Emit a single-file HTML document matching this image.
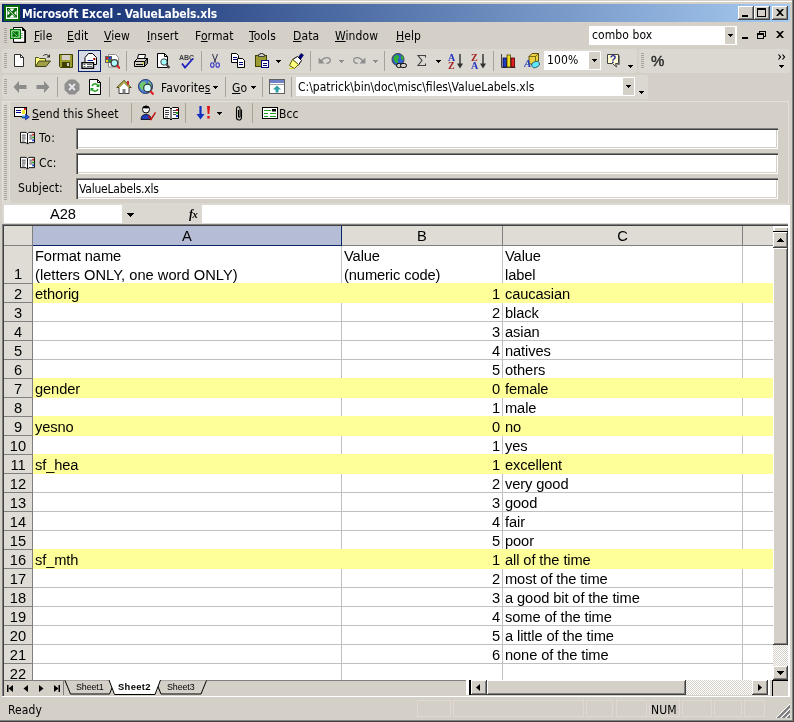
<!DOCTYPE html>
<html lang="en"><head><meta charset="utf-8"><title>Microsoft Excel - ValueLabels.xls</title>
<style>
html,body{margin:0;padding:0;background:#d4d0c8;}
body{width:794px;height:722px;overflow:hidden;position:relative;font-family:"Liberation Sans","DejaVu Sans",sans-serif;font-size:12px;color:#000;}
#win{will-change:transform;position:absolute;left:0;top:0;width:794px;height:722px;background:#d4d0c8;overflow:hidden;}
#win div,#win svg{position:absolute;}
.ui{font-family:"DejaVu Sans Condensed","Liberation Sans",sans-serif;font-size:12px;line-height:15px;white-space:nowrap;letter-spacing:0.1px;}
.ui u{text-decoration:underline;text-underline-offset:1px;text-decoration-thickness:1px;}
#title{left:2px;top:4px;width:788px;height:18px;background:linear-gradient(to right,#0a246a 0%,#a6caf0 100%);}
#title .tt{color:#fff;font-weight:bold;letter-spacing:-0.12px;}
.tb{background:#d4d0c8;box-shadow:inset -1px -1px 0 #404040,inset 1px 1px 0 #fff,inset -2px -2px 0 #808080;}
.grip{width:3px;background:repeating-linear-gradient(to bottom,#a8a49c 0,#a8a49c 1px,transparent 1px,transparent 2px);}
.sep{width:1px;background:#a6a399;}
.band{background:#dbd8d1;border-radius:3px;}
.inp{background:#fff;box-shadow:inset 1px 1px 0 #808080,inset 2px 2px 0 #404040,inset -1px -1px 0 #fff,inset -2px -2px 0 #d4d0c8;}
.dd{width:0;height:0;border-left:3px solid transparent;border-right:3px solid transparent;border-top:3px solid #000;}
.dd.g{border-top-color:#8c8c8c;}
/* grid */
#grid{left:4px;top:226px;width:769px;height:454px;background:#fff;overflow:hidden;font-family:"Liberation Sans",sans-serif;font-size:14.67px;}
.hc{background:#dfdcd5;border-right:1px solid #808080;border-bottom:1px solid #808080;text-align:center;line-height:20px;font-size:14.67px;}
.hc.sel{background:#b5bdd6;border-right-color:#0a246a;border-bottom-color:#0a246a;}
.rh{left:0;width:28px;background:#dfdcd5;border-right:1px solid #808080;border-bottom:1px solid #808080;text-align:center;line-height:21px;overflow:hidden;font-size:14.67px;}
.yel{left:29px;width:741px;height:20px;background:#ffff99;}
.gl{background:#c0c0c0;}
.ct{letter-spacing:-0.1px;white-space:nowrap;line-height:19px;height:19px;font-size:14.67px;font-family:"Liberation Sans",sans-serif;}
.ct.r{text-align:right;}
/* scroll */
.sbtn{background:#d4d0c8;box-shadow:inset -1px -1px 0 #404040,inset 1px 1px 0 #fff,inset -2px -2px 0 #808080;}
.dith{background-color:#fff;background-image:conic-gradient(#d4d0c8 25%,#fff 0 50%,#d4d0c8 0 75%,#fff 0);background-size:2px 2px;}
.tabt{font-family:"Liberation Sans",sans-serif;font-size:8.900px;line-height:12px;white-space:nowrap;letter-spacing:-0.1px;}

</style></head><body>
<div id="win">
<div style="left:0px;top:1px;width:792px;height:1px;background:#fff"></div>
<div style="left:792px;top:0px;width:1px;height:721px;background:#808080"></div>
<div style="left:793px;top:0px;width:1px;height:722px;background:#404040"></div>
<div style="left:0px;top:720px;width:793px;height:1px;background:#808080"></div>
<div style="left:0px;top:721px;width:794px;height:1px;background:#404040"></div>
<div id="title">
<svg style="left:2px;top:1px" width="16" height="16" viewBox="0 0 16 16" ><rect width="16" height="16" fill="#066a06"/><rect x="2.500" y="2.500" width="11" height="11" fill="none" stroke="#fff"/><path d="M5.500 3.500h5l-2.500 3zM5.500 12.500h5l-2.500-3zM3.500 5.500v5l2.500-2.500zM12.500 5.500v5l-2.500-2.500z" fill="#fff"/><path d="M4.500 4.500l6.500 7" stroke="#fff" stroke-width=".900"/><rect x="2" y="12.500" width="12" height="1.500" fill="#fff"/></svg>
<div class="tt ui" style="left:20px;top:3px;">Microsoft Excel - ValueLabels.xls</div>
<div class="tb" style="left:736px;top:2px;width:16px;height:14px;"><div style="left:4px;top:9px;width:6px;height:2px;background:#000"></div></div>
<div class="tb" style="left:752px;top:2px;width:16px;height:14px;"><div style="left:3px;top:2px;width:9px;height:9px;box-sizing:border-box;border:1px solid #000;border-top-width:2px"></div></div>
<div class="tb" style="left:770px;top:2px;width:16px;height:14px;"><svg style="left:4px;top:3px" width="8" height="7" viewBox="0 0 8 7"><path d="M0 0h2l2 2 2-2h2l-3 3.500 3 3.500h-2l-2-2-2 2h-2l3-3.500z" fill="#000"/></svg></div>
</div>
<div class="grip" style="left:4px;top:28px;height:15px"></div>
<svg style="left:10px;top:27px" width="16" height="16" viewBox="0 0 16 16" ><path d="M3.500 .500h9l3 3v12h-12z" fill="#fff" stroke="#000"/><path d="M12.500 .500v3h3z" fill="#000" stroke="#000"/><path d="M15 4v11.500h-11" fill="none" stroke="#000" stroke-width="1.600"/><path d="M11 6.500h2M11 8.500h2M11 10.500h2" stroke="#a0c0a0"/><rect x=".500" y="2.500" width="10" height="9" fill="#18a028" stroke="#0a7a0a"/><rect x="1.800" y="3.800" width="7.400" height="6.400" fill="none" stroke="#d8f0d8" stroke-width=".800"/><path d="M3 5l4.500 4.500M7.500 5l-4.500 4.500" stroke="#066a06" stroke-width="1.800"/><path d="M3.200 5.200l4 4" stroke="#d8f0d8" stroke-width=".600"/></svg>
<div class="ui" style="left:34px;top:29px;"><u>F</u>ile</div>
<div class="ui" style="left:67px;top:29px;"><u>E</u>dit</div>
<div class="ui" style="left:104px;top:29px;"><u>V</u>iew</div>
<div class="ui" style="left:147px;top:29px;"><u>I</u>nsert</div>
<div class="ui" style="left:195px;top:29px;">F<u>o</u>rmat</div>
<div class="ui" style="left:249px;top:29px;"><u>T</u>ools</div>
<div class="ui" style="left:293px;top:29px;"><u>D</u>ata</div>
<div class="ui" style="left:335px;top:29px;"><u>W</u>indow</div>
<div class="ui" style="left:396px;top:29px;"><u>H</u>elp</div>
<div style="left:589px;top:26px;width:148px;height:19px;background:#fff"></div>
<div class="ui" style="left:592px;top:28px;">combo box</div>
<div style="left:725px;top:27px;width:10px;height:17px;background:#d4d0c8"></div>
<svg style="left:728px;top:34px" width="5" height="3" viewBox="0 0 5 3" shape-rendering="crispEdges" fill="#000"><rect x="0" y="0" width="5" height="1"/><rect x="1" y="1" width="3" height="1"/><rect x="2" y="2" width="1" height="1"/></svg>
<div style="left:742px;top:37px;width:6px;height:2px;background:#000"></div>
<svg style="left:757px;top:30px" width="9" height="9" viewBox="0 0 9 9" shape-rendering="crispEdges"><path d="M2.500 2.500v-1.500h6v5h-2" fill="none" stroke="#000"/><path d="M2 1h7" stroke="#000"/><rect x=".500" y="3.500" width="6" height="5" fill="none" stroke="#000"/><path d="M0 4h7" stroke="#000"/></svg>
<svg style="left:776px;top:31px" width="8" height="7" viewBox="0 0 8 7"><path d="M0 0h2l2 2 2-2h2l-3 3.500 3 3.500h-2l-2-2-2 2h-2l3-3.500z" fill="#000"/></svg>
<div class="band" style="left:2px;top:49px;width:635px;height:24px;"></div>
<div class="grip" style="left:4px;top:53px;height:15px"></div>
<svg style="left:12px;top:53px" width="16" height="16" viewBox="0 0 16 16" ><path d="M2.500 1.500h6l3 3v9h-9z" fill="#fff" stroke="#303030"/><path d="M8.500 1.500v3h3" fill="none" stroke="#303030"/></svg>
<svg style="left:35px;top:53px" width="16" height="16" viewBox="0 0 16 16" ><path d="M.500 13.500v-9h3l1 1h6v2.500" fill="#ffff80" stroke="#505020"/><path d="M.500 13.500l3.500-5.500h11.500l-4.500 5.500z" fill="#a0a048" stroke="#404010"/><path d="M8 3c1.500-2 4.500-2 6 .500" fill="none" stroke="#303030"/><path d="M15 1v3.500h-3.500z" fill="#303030"/></svg>
<svg style="left:58px;top:53px" width="16" height="16" viewBox="0 0 16 16" ><path d="M1.500 1.500h13v13h-12l-1-1z" fill="#9c9c31" stroke="#404000"/><rect x="4" y="2" width="8" height="5" fill="#d4d0c8"/><rect x="4" y="9" width="8" height="5" fill="#404000"/><rect x="9" y="10" width="2" height="3" fill="#d4d0c8"/></svg>
<div style="left:78px;top:50px;width:23px;height:22px;background:#d6d9e6;border:1px solid #0a246a;box-sizing:border-box"></div>
<svg style="left:81px;top:53px" width="16" height="16" viewBox="0 0 16 16" ><path d="M4 12.500V4.500L7.500 .500H11.500L15.500 4.500V11.500H13" fill="#fff" stroke="#000"/><path d="M6.500 7.500h5.500" stroke="#1020a0"/><rect x="12.300" y="5" width="2" height="2" fill="#a00000"/><rect x="1" y="9.700" width="11.500" height="5.600" fill="#fff" stroke="#000" stroke-width="1.400"/><path d="M2.500 11.500h2M2.500 13.500h2M6 11.500h5M6 13.500h5" stroke="#505050" stroke-width=".900"/></svg>
<svg style="left:104px;top:53px" width="16" height="16" viewBox="0 0 16 16" ><path d="M4.500 1.500h7l3 3v9.500h-10z" fill="#fff" stroke="#909090"/><rect x="1" y="3" width="7" height="7" fill="#606060"/><rect x="2" y="4" width="2" height="2" fill="#e02020"/><rect x="5" y="4" width="2" height="2" fill="#2040e0"/><rect x="2" y="7" width="2" height="2" fill="#f0e020"/><rect x="5" y="7" width="2" height="2" fill="#20a020"/><circle cx="10.400" cy="10" r="3.300" fill="#b0ffff" stroke="#404040" stroke-width="1.300"/><path d="M13 12.500l3 3" stroke="#e02020" stroke-width="2"/></svg>
<div class="sep" style="left:126px;top:51px;height:20px"></div>
<svg style="left:133px;top:53px" width="16" height="16" viewBox="0 0 16 16" ><path d="M4.500 5.500l1-4h7l-1 4" fill="#fff" stroke="#000"/><path d="M1.500 8.500l3-3h10l-3 3z" fill="#d4d0c8" stroke="#000"/><path d="M1.500 8.500h10v5h-10z" fill="#d4d0c8" stroke="#000"/><path d="M11.500 8.500l3-3v5l-3 3z" fill="#808080" stroke="#000"/><path d="M3 11.500h7" stroke="#000"/><rect x="9" y="9.500" width="2" height="1" fill="#e0e000"/></svg>
<svg style="left:155px;top:53px" width="16" height="16" viewBox="0 0 16 16" ><path d="M2.500 .500h7l3 3v11h-10z" fill="#fff" stroke="#000"/><path d="M9.500 .500v3h3" fill="none" stroke="#000"/><circle cx="9" cy="9" r="3.200" fill="#a0ffff" stroke="#404040"/><path d="M11.500 11.500l3 3.500" stroke="#404040" stroke-width="2"/></svg>
<svg style="left:179px;top:53px" width="16" height="16" viewBox="0 0 16 16" ><text x="0" y="6.500" font-family="Liberation Sans,sans-serif" font-size="7" font-weight="bold" fill="#404040">ABC</text><path d="M3 10.500l3 4l8-9" fill="none" stroke="#2020c0" stroke-width="1.800"/></svg>
<div class="sep" style="left:201px;top:51px;height:20px"></div>
<svg style="left:207px;top:53px" width="16" height="16" viewBox="0 0 16 16" ><path d="M5.500 1l3 8.500M10.500 1l-3 8.500" stroke="#303048" fill="none"/><ellipse cx="5.300" cy="12" rx="1.700" ry="2.300" fill="none" stroke="#3838c8" stroke-width="1.100"/><ellipse cx="10.700" cy="12" rx="1.700" ry="2.300" fill="none" stroke="#3838c8" stroke-width="1.100"/></svg>
<svg style="left:231px;top:53px" width="16" height="16" viewBox="0 0 16 16" ><path d="M.500 .500h5l2 2v7h-7z" fill="#fff" stroke="#000"/><path d="M2 4.500h4M2 6.500h4" stroke="#000080"/><path d="M6.500 5.500h5l2 2v7h-7z" fill="#fff" stroke="#000"/><path d="M8 9.500h4M8 11.500h4" stroke="#000080"/></svg>
<svg style="left:254px;top:53px" width="16" height="16" viewBox="0 0 16 16" ><rect x="1.500" y="2.500" width="11" height="11" fill="#9c9c31" stroke="#404000"/><path d="M4.500 3.500v-2h1.500v-1h3v1h1.500v2z" fill="#d4d0c8" stroke="#404040"/><rect x="7.500" y="7.500" width="7" height="7" fill="#fff" stroke="#000080"/><path d="M9 10.500h4M9 12.500h4" stroke="#000080"/></svg>
<svg style="left:276px;top:60px" width="5" height="3" viewBox="0 0 5 3" shape-rendering="crispEdges" fill="#000"><rect x="0" y="0" width="5" height="1"/><rect x="1" y="1" width="3" height="1"/><rect x="2" y="2" width="1" height="1"/></svg>
<svg style="left:288px;top:53px" width="16" height="16" viewBox="0 0 16 16" ><path d="M10 5l3-4.500 2.500 1.500-3 4.500z" fill="#000080" stroke="#000040" stroke-width=".600"/><path d="M4.500 6.500l5-3 4 4-3 4.500z" fill="#fff" stroke="#000"/><path d="M1.500 12.500l3-6 6 5-4 4z" fill="#ffff80" stroke="#606000"/><path d="M1 15.500h4" stroke="#e0e000"/></svg>
<div class="sep" style="left:310px;top:51px;height:20px"></div>
<svg style="left:317px;top:53px" width="16" height="16" viewBox="0 0 16 16" ><path d="M4.500 8C6 4 13 3.500 13.300 7c0 2-1.500 3.300-4 3.300" fill="none" stroke="#8c8c8c" stroke-width="1.300"/><path d="M1.600 4.600v6h6z" fill="#8c8c8c"/></svg>
<svg style="left:339px;top:60px" width="5" height="3" viewBox="0 0 5 3" shape-rendering="crispEdges" fill="#8c8c8c"><rect x="0" y="0" width="5" height="1"/><rect x="1" y="1" width="3" height="1"/><rect x="2" y="2" width="1" height="1"/></svg>
<svg style="left:351px;top:53px" width="16" height="16" viewBox="0 0 16 16" ><path d="M11.500 8C10 4 3 3.500 2.700 7c0 2 1.500 3.300 4 3.300" fill="none" stroke="#8c8c8c" stroke-width="1.300"/><path d="M14.400 4.600v6h-6z" fill="#8c8c8c"/></svg>
<svg style="left:373px;top:60px" width="5" height="3" viewBox="0 0 5 3" shape-rendering="crispEdges" fill="#8c8c8c"><rect x="0" y="0" width="5" height="1"/><rect x="1" y="1" width="3" height="1"/><rect x="2" y="2" width="1" height="1"/></svg>
<div class="sep" style="left:384px;top:51px;height:20px"></div>
<svg style="left:391px;top:53px" width="16" height="16" viewBox="0 0 16 16" ><circle cx="7" cy="6.500" r="6" fill="#3060d0" stroke="#404040"/><path d="M3 4c2-3 5-2 5 0s-2 2-1 4-2 3-3 1-2-3-1-5z" fill="#30b030"/><path d="M10 2c2 1 3 3 2 5l-2-1z" fill="#30b030"/><rect x="5.500" y="10.500" width="5" height="4" rx="2" fill="#d4d0c8" stroke="#000"/><rect x="9.500" y="10.500" width="6" height="4" rx="2" fill="#d4d0c8" stroke="#000"/></svg>
<svg style="left:415px;top:53px" width="16" height="16" viewBox="0 0 16 16" ><path d="M10.500 4.500v-2h-7.500l4 5-4 5h7.500v-2" fill="none" stroke="#404040" stroke-width="1.100"/></svg>
<svg style="left:436px;top:60px" width="5" height="3" viewBox="0 0 5 3" shape-rendering="crispEdges" fill="#000"><rect x="0" y="0" width="5" height="1"/><rect x="1" y="1" width="3" height="1"/><rect x="2" y="2" width="1" height="1"/></svg>
<svg style="left:448px;top:53px" width="16" height="16" viewBox="0 0 16 16" ><text x="0" y="7.500" font-family="Liberation Serif,serif" font-size="10" font-weight="bold" fill="#2030c0">A</text><text x="0" y="16" font-family="Liberation Serif,serif" font-size="10" font-weight="bold" fill="#a02020">Z</text><path d="M12 1v11" stroke="#303030" stroke-width="1.400"/><path d="M9 10.500h6l-3 5z" fill="#303030"/></svg>
<svg style="left:471px;top:53px" width="16" height="16" viewBox="0 0 16 16" ><text x="0" y="7.500" font-family="Liberation Serif,serif" font-size="10" font-weight="bold" fill="#a02020">Z</text><text x="0" y="16" font-family="Liberation Serif,serif" font-size="10" font-weight="bold" fill="#2030c0">A</text><path d="M12 1v11" stroke="#303030" stroke-width="1.400"/><path d="M9 10.500h6l-3 5z" fill="#303030"/></svg>
<div class="sep" style="left:493px;top:51px;height:20px"></div>
<svg style="left:500px;top:53px" width="16" height="16" viewBox="0 0 16 16" ><path d="M1.500 1v13.500h14" fill="none" stroke="#404040"/><rect x="3" y="5" width="3.500" height="9" fill="#2040c0" stroke="#000040" stroke-width=".800"/><rect x="7" y="2" width="3.500" height="12" fill="#f0e020" stroke="#504000" stroke-width=".800"/><rect x="11" y="5" width="3.500" height="9" fill="#e02020" stroke="#400000" stroke-width=".800"/></svg>
<svg style="left:524px;top:53px" width="16" height="16" viewBox="0 0 16 16" ><path d="M5 3.500l3-3h6.500v7.500l-3 3h-6.500z" fill="#e8d040" stroke="#504000" stroke-width=".900"/><path d="M5 3.500h6.500v7.500M11.500 3.500l3-3" fill="none" stroke="#504000" stroke-width=".700"/><text x="0" y="13.500" font-family="Liberation Serif,serif" font-size="11" font-weight="bold" font-style="italic" fill="#2040c0">A</text><rect x="7.500" y="9" width="8" height="5.500" rx="2.700" fill="#60e8f8" stroke="#205060" stroke-width=".800" transform="rotate(-25 11 11.500)"/></svg>
<div style="left:544px;top:51px;width:57px;height:19px;background:#fff"></div>
<div class="ui" style="left:547px;top:53px;">100%</div>
<div style="left:589px;top:52px;width:11px;height:17px;background:#d4d0c8"></div>
<svg style="left:592px;top:59px" width="5" height="3" viewBox="0 0 5 3" shape-rendering="crispEdges" fill="#000"><rect x="0" y="0" width="5" height="1"/><rect x="1" y="1" width="3" height="1"/><rect x="2" y="2" width="1" height="1"/></svg>
<svg style="left:606px;top:53px" width="16" height="16" viewBox="0 0 16 16" ><path d="M1.500 1.500h11v9h-3l1 3.500-4-3.500h-5z" fill="#ffffd0" stroke="#404040"/><path d="M13.500 2.500v9h-3" fill="none" stroke="#808080"/><text x="3.800" y="10" font-family="Liberation Sans,sans-serif" font-size="11" font-weight="bold" fill="#2828a0">?</text></svg>
<svg style="left:628px;top:65px" width="5" height="3" viewBox="0 0 5 3" shape-rendering="crispEdges" fill="#000"><rect x="0" y="0" width="5" height="1"/><rect x="1" y="1" width="3" height="1"/><rect x="2" y="2" width="1" height="1"/></svg>
<div class="band" style="left:639px;top:49px;width:151px;height:24px;"></div>
<div class="grip" style="left:641px;top:53px;height:15px"></div>
<div class="ui" style="left:651px;top:52px;font-family:'Liberation Sans',sans-serif;font-size:15px;line-height:18px;color:#282828;-webkit-text-stroke:0.400px #282828">%</div>
<svg style="left:778px;top:54px" width="9" height="6" viewBox="0 0 9 6"><path d="M.500 .500l2 2.500-2 2.500M4.500 .500l2 2.500-2 2.500" fill="none" stroke="#000" stroke-width="1.200"/></svg>
<svg style="left:779px;top:65px" width="5" height="3" viewBox="0 0 5 3" shape-rendering="crispEdges" fill="#000"><rect x="0" y="0" width="5" height="1"/><rect x="1" y="1" width="3" height="1"/><rect x="2" y="2" width="1" height="1"/></svg>
<div class="band" style="left:2px;top:75px;width:646px;height:24px;"></div>
<div class="grip" style="left:4px;top:79px;height:15px"></div>
<svg style="left:12px;top:79px" width="16" height="16" viewBox="0 0 16 16" ><path d="M1.500 8l5.500-6v4h7.500v4h-7.500v4z" fill="#8c8c8c"/></svg>
<svg style="left:35px;top:79px" width="16" height="16" viewBox="0 0 16 16" ><path d="M14.500 8l-5.500-6v4h-7.500v4h7.500v4z" fill="#8c8c8c"/></svg>
<div class="sep" style="left:57px;top:77px;height:20px"></div>
<svg style="left:64px;top:79px" width="16" height="16" viewBox="0 0 16 16" ><path d="M5 .500h6l4.500 4.500v6l-4.500 4.500h-6l-4.500-4.500v-6z" fill="#909090"/><path d="M5 5l6 6M11 5l-6 6" stroke="#e8e8e8" stroke-width="1.800"/></svg>
<svg style="left:87px;top:79px" width="16" height="16" viewBox="0 0 16 16" ><path d="M2.500 .500h8l3 3v12h-11z" fill="#fff" stroke="#000"/><path d="M10.500 .500v3h3" fill="none" stroke="#000"/><path d="M5 7c1-3 5-3 6 0" fill="none" stroke="#20a020" stroke-width="1.500"/><path d="M12.500 4.500v3.500h-3.500z" fill="#20a020"/><path d="M11 10c-1 3-5 3-6 0" fill="none" stroke="#20a020" stroke-width="1.500"/><path d="M3.500 12.500v-3.500h3.500z" fill="#20a020"/></svg>
<div class="sep" style="left:109px;top:77px;height:20px"></div>
<svg style="left:116px;top:79px" width="16" height="16" viewBox="0 0 16 16" ><path d="M8 1.500l-7 7h2v6h10v-6h2z" fill="#fff" stroke="#404040"/><path d="M8 1.500l-7 7h2l5-5 5 5h2z" fill="#e8e060" stroke="#404000" stroke-width=".800"/><rect x="6.500" y="10" width="3" height="4.500" fill="#808080"/><rect x="11" y="2" width="2" height="4" fill="#c03030"/></svg>
<svg style="left:138px;top:79px" width="16" height="16" viewBox="0 0 16 16" ><circle cx="7.500" cy="7.500" r="7" fill="#5080d8" stroke="#203060"/><path d="M2 5c2-3 5-3 6-1s-2 3-1 5-3 3-4 1-2-3-1-5z" fill="#70c870"/><path d="M10 2c2 1 4 3 3 6l-2-2z" fill="#70c870"/><circle cx="9.500" cy="9" r="3.800" fill="#d8ffff" stroke="#303030" stroke-width="1.200"/><path d="M12.300 12l3.200 3.500" stroke="#e02020" stroke-width="2.200"/></svg>
<div class="ui" style="left:161px;top:81px;">Favorite<u>s</u></div>
<svg style="left:213px;top:86px" width="5" height="3" viewBox="0 0 5 3" shape-rendering="crispEdges" fill="#000"><rect x="0" y="0" width="5" height="1"/><rect x="1" y="1" width="3" height="1"/><rect x="2" y="2" width="1" height="1"/></svg>
<div class="sep" style="left:225px;top:77px;height:20px"></div>
<div class="ui" style="left:232px;top:81px;"><u>G</u>o</div>
<svg style="left:251px;top:86px" width="5" height="3" viewBox="0 0 5 3" shape-rendering="crispEdges" fill="#000"><rect x="0" y="0" width="5" height="1"/><rect x="1" y="1" width="3" height="1"/><rect x="2" y="2" width="1" height="1"/></svg>
<div class="sep" style="left:262px;top:77px;height:20px"></div>
<svg style="left:269px;top:79px" width="16" height="16" viewBox="0 0 16 16" ><rect x=".500" y=".500" width="15" height="14" fill="#fff" stroke="#606060"/><rect x="1" y="1" width="14" height="3" fill="#7080c8"/><path d="M1 5.500h14" stroke="#a0a0a0"/><path d="M8 6.500l-4 4h2.500v3h3v-3h2.500z" fill="#30a0a8"/></svg>
<div class="sep" style="left:291px;top:77px;height:20px"></div>
<div style="left:296px;top:77px;width:339px;height:19px;background:#fff"></div>
<div class="ui" style="left:298px;top:80px;letter-spacing:0">C:\patrick\bin\doc\misc\files\ValueLabels.xls</div>
<div style="left:623px;top:78px;width:11px;height:17px;background:#d4d0c8"></div>
<svg style="left:626px;top:85px" width="5" height="3" viewBox="0 0 5 3" shape-rendering="crispEdges" fill="#000"><rect x="0" y="0" width="5" height="1"/><rect x="1" y="1" width="3" height="1"/><rect x="2" y="2" width="1" height="1"/></svg>
<svg style="left:639px;top:91px" width="5" height="3" viewBox="0 0 5 3" shape-rendering="crispEdges" fill="#000"><rect x="0" y="0" width="5" height="1"/><rect x="1" y="1" width="3" height="1"/><rect x="2" y="2" width="1" height="1"/></svg>
<div style="left:2px;top:101px;width:787px;height:102px;background:#d4d0c8;border:1px solid #e4e1db;border-bottom:0;box-sizing:border-box"></div>
<div style="left:3px;top:102px;width:6px;height:101px;background:#dbd8d1"></div>
<div class="grip" style="left:4px;top:105px;height:95px"></div>
<div style="left:9px;top:102px;width:1px;height:101px;background:#e4e1db"></div>
<svg style="left:14px;top:105px" width="16" height="16" viewBox="0 0 16 16" ><rect x=".500" y="2.500" width="12" height="9" fill="#fff" stroke="#000"/><path d="M2 5.500h5M2 7.500h5" stroke="#000080"/><rect x="10" y="3" width="2" height="2" fill="#e02020"/><rect x="8" y="5" width="3" height="4" fill="#f0e020"/><path d="M8 11h3.500v-2l4 3-4 3v-2h-3.500z" fill="#2050e0" stroke="#001060" stroke-width=".500"/><path d="M8 11.500h3" stroke="#30c0c0"/></svg>
<div class="ui" style="left:32px;top:107px;"><u>S</u>end this Sheet</div>
<div class="sep" style="left:131px;top:103px;height:20px"></div>
<svg style="left:140px;top:105px" width="16" height="16" viewBox="0 0 16 16" ><circle cx="6" cy="4.500" r="3.500" fill="#fff" stroke="#000"/><path d="M2.500 3c1-3 6-3 7 0-2 .500-5 .500-7 0z" fill="#000"/><path d="M1 14.500c0-4 2.500-5 5-5s5 1 5 5z" fill="#2040c0" stroke="#000" stroke-width=".800"/><path d="M8.500 11l2.500 3.500 4.500-7" fill="none" stroke="#c01010" stroke-width="1.500"/></svg>
<svg style="left:163px;top:105px" width="16" height="16" viewBox="0 0 16 16" ><path d="M.500 2.500h6l1.500 1.500 1.500-1.500h6v11h-6l-1.500 1.500-1.500-1.500h-6z" fill="#fff" stroke="#000"/><path d="M8 4v11" stroke="#000"/><path d="M2 5.500h4M2 7.500h4M2 9.500h4M10 5.500h3M10 7.500h3M10 9.500h3" stroke="#404040"/><rect x="13" y="4" width="2" height="2" fill="#d02020"/><rect x="13" y="7" width="2" height="2" fill="#20a020"/><rect x="13" y="10" width="2" height="2" fill="#2040d0"/><rect x="2" y="11" width="3" height="1.500" fill="#808080"/></svg>
<div class="sep" style="left:185px;top:103px;height:20px"></div>
<svg style="left:196px;top:105px" width="16" height="16" viewBox="0 0 16 16" ><path d="M4.500 1v9" stroke="#1030c0" stroke-width="2.200"/><path d="M.500 9h8l-4 5.500z" fill="#1030c0"/><path d="M11 1h3l-.700 8h-1.600z" fill="#e01010"/><rect x="11.300" y="11" width="2.400" height="2.500" fill="#e01010"/></svg>
<svg style="left:217px;top:112px" width="5" height="3" viewBox="0 0 5 3" shape-rendering="crispEdges" fill="#000"><rect x="0" y="0" width="5" height="1"/><rect x="1" y="1" width="3" height="1"/><rect x="2" y="2" width="1" height="1"/></svg>
<svg style="left:231px;top:105px" width="16" height="16" viewBox="0 0 16 16" ><path d="M10.500 4.500v8a2.500 2.500 0 0 1-5 0v-9a1.800 1.800 0 0 1 3.600 0v8a.800 .800 0 0 1-1.600 0v-6.500" fill="none" stroke="#000" stroke-width="1.100"/></svg>
<div class="sep" style="left:252px;top:103px;height:20px"></div>
<svg style="left:262px;top:105px" width="16" height="16" viewBox="0 0 16 16" ><rect x=".500" y="2.500" width="15" height="11" fill="#fff" stroke="#000"/><path d="M2 5.500h7M2 8.500h4M2 11.500h4M8 8.500h6M8 11.500h6" stroke="#20a020" stroke-width="1.200"/><rect x="10" y="4" width="4" height="2.500" fill="#000"/></svg>
<div class="ui" style="left:279px;top:107px;">Bcc</div>
<svg style="left:20px;top:130px" width="15" height="15" viewBox="0 0 16 16" ><path d="M.500 2.500h6l1.500 1.500 1.500-1.500h6v11h-6l-1.500 1.500-1.500-1.500h-6z" fill="#fff" stroke="#000"/><path d="M8 4v11" stroke="#000"/><path d="M2 5.500h4M2 7.500h4M2 9.500h4M10 5.500h3M10 7.500h3M10 9.500h3" stroke="#404040"/><rect x="13" y="4" width="2" height="2" fill="#d02020"/><rect x="13" y="7" width="2" height="2" fill="#20a020"/><rect x="13" y="10" width="2" height="2" fill="#2040d0"/><rect x="2" y="11" width="3" height="1.500" fill="#808080"/></svg>
<div class="ui" style="left:39px;top:131px;letter-spacing:0.600px">To:</div>
<div class="inp" style="left:76px;top:128px;width:702px;height:21px;"></div>
<svg style="left:20px;top:155px" width="15" height="15" viewBox="0 0 16 16" ><path d="M.500 2.500h6l1.500 1.500 1.500-1.500h6v11h-6l-1.500 1.500-1.500-1.500h-6z" fill="#fff" stroke="#000"/><path d="M8 4v11" stroke="#000"/><path d="M2 5.500h4M2 7.500h4M2 9.500h4M10 5.500h3M10 7.500h3M10 9.500h3" stroke="#404040"/><rect x="13" y="4" width="2" height="2" fill="#d02020"/><rect x="13" y="7" width="2" height="2" fill="#20a020"/><rect x="13" y="10" width="2" height="2" fill="#2040d0"/><rect x="2" y="11" width="3" height="1.500" fill="#808080"/></svg>
<div class="ui" style="left:39px;top:156px;">Cc:</div>
<div class="inp" style="left:76px;top:153px;width:702px;height:21px;"></div>
<div class="ui" style="left:18px;top:181px;">Subject:</div>
<div class="inp" style="left:76px;top:178px;width:702px;height:21px;"></div>
<div class="ui" style="left:79px;top:182px;letter-spacing:-0.200px">ValueLabels.xls</div>
<div style="left:2px;top:203px;width:788px;height:21px;background:#dbd8d1"></div>
<div style="left:4px;top:205px;width:786px;height:18px;background:#fff"></div>
<div class="ct" style="left:50px;top:205px;font-family:'Liberation Sans',sans-serif;font-size:14.67px;line-height:18px;height:18px">A28</div>
<div style="left:122px;top:205px;width:80px;height:18px;background:#dbd8d1"></div>
<svg style="left:127px;top:213px" width="7" height="4" viewBox="0 0 7 4" shape-rendering="crispEdges" fill="#000"><rect x="0" y="0" width="7" height="1"/><rect x="1" y="1" width="5" height="1"/><rect x="2" y="2" width="3" height="1"/><rect x="3" y="3" width="1" height="1"/></svg>
<div style="left:189px;top:205px;font-family:'Liberation Serif',serif;font-style:italic;font-weight:bold;font-size:12px;line-height:18px;white-space:nowrap">f<span style="font-size:10.500px;margin-left:-0.500px">x</span></div>
<div style="left:2px;top:224px;width:788px;height:1px;background:#808080"></div>
<div style="left:3px;top:225px;width:787px;height:1px;background:#404040"></div>
<div style="left:2px;top:224px;width:1px;height:472px;background:#808080"></div>
<div style="left:3px;top:225px;width:1px;height:471px;background:#404040"></div>
<div id="grid">
<div class="hc corner" style="left:0;top:0;width:28px;height:19px"></div>
<div class="hc sel" style="left:29px;top:0;width:308px;height:19px">A</div>
<div class="hc" style="left:338px;top:0;width:160px;height:19px">B</div>
<div class="hc" style="left:499px;top:0;width:239px;height:19px">C</div>
<div class="hc" style="left:739px;top:0;width:31px;height:19px"></div>
<div class="rh" style="top:20px;padding-top:18px;height:19px">1</div>
<div class="rh" style="top:58px;height:18px">2</div>
<div class="rh" style="top:77px;height:18px">3</div>
<div class="rh" style="top:96px;height:18px">4</div>
<div class="rh" style="top:115px;height:18px">5</div>
<div class="rh" style="top:134px;height:18px">6</div>
<div class="rh" style="top:153px;height:18px">7</div>
<div class="rh" style="top:172px;height:18px">8</div>
<div class="rh" style="top:191px;height:18px">9</div>
<div class="rh" style="top:210px;height:18px">10</div>
<div class="rh" style="top:229px;height:18px">11</div>
<div class="rh" style="top:248px;height:18px">12</div>
<div class="rh" style="top:267px;height:18px">13</div>
<div class="rh" style="top:286px;height:18px">14</div>
<div class="rh" style="top:305px;height:18px">15</div>
<div class="rh" style="top:324px;height:18px">16</div>
<div class="rh" style="top:343px;height:18px">17</div>
<div class="rh" style="top:362px;height:18px">18</div>
<div class="rh" style="top:381px;height:18px">19</div>
<div class="rh" style="top:400px;height:18px">20</div>
<div class="rh" style="top:419px;height:18px">21</div>
<div class="rh" style="top:438px;height:18px">22</div>
<div class="gl" style="left:29px;top:57px;width:741px;height:1px"></div>
<div class="gl" style="left:29px;top:76px;width:741px;height:1px"></div>
<div class="gl" style="left:29px;top:95px;width:741px;height:1px"></div>
<div class="gl" style="left:29px;top:114px;width:741px;height:1px"></div>
<div class="gl" style="left:29px;top:133px;width:741px;height:1px"></div>
<div class="gl" style="left:29px;top:152px;width:741px;height:1px"></div>
<div class="gl" style="left:29px;top:171px;width:741px;height:1px"></div>
<div class="gl" style="left:29px;top:190px;width:741px;height:1px"></div>
<div class="gl" style="left:29px;top:209px;width:741px;height:1px"></div>
<div class="gl" style="left:29px;top:228px;width:741px;height:1px"></div>
<div class="gl" style="left:29px;top:247px;width:741px;height:1px"></div>
<div class="gl" style="left:29px;top:266px;width:741px;height:1px"></div>
<div class="gl" style="left:29px;top:285px;width:741px;height:1px"></div>
<div class="gl" style="left:29px;top:304px;width:741px;height:1px"></div>
<div class="gl" style="left:29px;top:323px;width:741px;height:1px"></div>
<div class="gl" style="left:29px;top:342px;width:741px;height:1px"></div>
<div class="gl" style="left:29px;top:361px;width:741px;height:1px"></div>
<div class="gl" style="left:29px;top:380px;width:741px;height:1px"></div>
<div class="gl" style="left:29px;top:399px;width:741px;height:1px"></div>
<div class="gl" style="left:29px;top:418px;width:741px;height:1px"></div>
<div class="gl" style="left:29px;top:437px;width:741px;height:1px"></div>
<div class="gl" style="left:29px;top:456px;width:741px;height:1px"></div>
<div class="gl v" style="left:337px;top:20px;width:1px;height:434px"></div>
<div class="gl v" style="left:498px;top:20px;width:1px;height:434px"></div>
<div class="gl v" style="left:738px;top:20px;width:1px;height:434px"></div>
<div class="yel" style="top:57px"></div>
<div class="yel" style="top:152px"></div>
<div class="yel" style="top:190px"></div>
<div class="yel" style="top:228px"></div>
<div class="yel" style="top:323px"></div>
<div class="ct" style="left:31px;top:21px">Format name</div>
<div class="ct" style="left:31px;top:40px;letter-spacing:0.02px">(letters ONLY, one word ONLY)</div>
<div class="ct" style="left:340px;top:21px">Value</div>
<div class="ct" style="left:340px;top:40px">(numeric code)</div>
<div class="ct" style="left:501px;top:21px">Value</div>
<div class="ct" style="left:501px;top:40px">label</div>
<div class="ct" style="left:31px;top:59px">ethorig</div>
<div class="ct r" style="left:338px;width:158px;top:59px">1</div>
<div class="ct" style="left:501px;top:59px">caucasian</div>
<div class="ct r" style="left:338px;width:158px;top:78px">2</div>
<div class="ct" style="left:501px;top:78px">black</div>
<div class="ct r" style="left:338px;width:158px;top:97px">3</div>
<div class="ct" style="left:501px;top:97px">asian</div>
<div class="ct r" style="left:338px;width:158px;top:116px">4</div>
<div class="ct" style="left:501px;top:116px">natives</div>
<div class="ct r" style="left:338px;width:158px;top:135px">5</div>
<div class="ct" style="left:501px;top:135px">others</div>
<div class="ct" style="left:31px;top:154px">gender</div>
<div class="ct r" style="left:338px;width:158px;top:154px">0</div>
<div class="ct" style="left:501px;top:154px">female</div>
<div class="ct r" style="left:338px;width:158px;top:173px">1</div>
<div class="ct" style="left:501px;top:173px">male</div>
<div class="ct" style="left:31px;top:192px">yesno</div>
<div class="ct r" style="left:338px;width:158px;top:192px">0</div>
<div class="ct" style="left:501px;top:192px">no</div>
<div class="ct r" style="left:338px;width:158px;top:211px">1</div>
<div class="ct" style="left:501px;top:211px">yes</div>
<div class="ct" style="left:31px;top:230px">sf_hea</div>
<div class="ct r" style="left:338px;width:158px;top:230px">1</div>
<div class="ct" style="left:501px;top:230px">excellent</div>
<div class="ct r" style="left:338px;width:158px;top:249px">2</div>
<div class="ct" style="left:501px;top:249px">very good</div>
<div class="ct r" style="left:338px;width:158px;top:268px">3</div>
<div class="ct" style="left:501px;top:268px">good</div>
<div class="ct r" style="left:338px;width:158px;top:287px">4</div>
<div class="ct" style="left:501px;top:287px">fair</div>
<div class="ct r" style="left:338px;width:158px;top:306px">5</div>
<div class="ct" style="left:501px;top:306px">poor</div>
<div class="ct" style="left:31px;top:325px">sf_mth</div>
<div class="ct r" style="left:338px;width:158px;top:325px">1</div>
<div class="ct" style="left:501px;top:325px">all of the time</div>
<div class="ct r" style="left:338px;width:158px;top:344px">2</div>
<div class="ct" style="left:501px;top:344px">most of the time</div>
<div class="ct r" style="left:338px;width:158px;top:363px">3</div>
<div class="ct" style="left:501px;top:363px">a good bit of the time</div>
<div class="ct r" style="left:338px;width:158px;top:382px">4</div>
<div class="ct" style="left:501px;top:382px">some of the time</div>
<div class="ct r" style="left:338px;width:158px;top:401px">5</div>
<div class="ct" style="left:501px;top:401px">a little of the time</div>
<div class="ct r" style="left:338px;width:158px;top:420px">6</div>
<div class="ct" style="left:501px;top:420px">none of the time</div>
</div>
<div class="dith" style="left:773px;top:226px;width:15px;height:454px;"></div>
<div style="left:773px;top:226px;width:15px;height:5px;background:#d4d0c8;box-shadow:inset 2px 2px 0 #fff,inset -1px 0 0 #808080"></div>
<div style="left:773px;top:231px;width:15px;height:1px;background:#000"></div>
<div class="sbtn" style="left:773px;top:232px;width:15px;height:16px;"><svg style="left:4px;top:6px" width="7" height="4" viewBox="0 0 7 4" shape-rendering="crispEdges"><rect x="3" y="0" width="1" height="1"/><rect x="2" y="1" width="3" height="1"/><rect x="1" y="2" width="5" height="1"/><rect x="0" y="3" width="7" height="1"/></svg></div>
<div class="sbtn" style="left:773px;top:248px;width:15px;height:397px;"></div>
<div class="sbtn" style="left:773px;top:666px;width:15px;height:14px;"><svg style="left:4px;top:5px" width="7" height="4" viewBox="0 0 7 4" shape-rendering="crispEdges"><rect x="3" y="3" width="1" height="1"/><rect x="2" y="2" width="3" height="1"/><rect x="1" y="1" width="5" height="1"/><rect x="0" y="0" width="7" height="1"/></svg></div>
<div style="left:788px;top:205px;width:2px;height:492px;background:#fff"></div>
<div style="left:4px;top:680px;width:769px;height:16px;background:#d4d0c8"></div>
<div style="left:4px;top:680px;width:462px;height:1px;background:#808080"></div>
<div style="left:2px;top:696px;width:788px;height:1px;background:#fff"></div>
<svg style="left:4px;top:680px" width="62" height="16" viewBox="0 0 62 16"><g fill="#000"><rect x="3" y="5" width="1.500" height="7"/><path d="M9 5v7l-4.500-3.500z"/><path d="M24 5v7l-4.500-3.500z"/><path d="M35 5v7l4.500-3.500z"/><path d="M50 5v7l4.500-3.500z"/><rect x="54.500" y="5" width="1.500" height="7"/></g><path d="M59.500 1v14" stroke="#808080"/></svg>
<svg style="left:60px;top:680px" width="160" height="16" viewBox="0 0 160 16"><path d="M5 .500L10.500 14H49.500L55 .500" fill="#d4d0c8" stroke="#000"/><path d="M95.500 .500L101 14H141L146.500 .500" fill="#d4d0c8" stroke="#000"/><path d="M49 0L54.500 14.500H95L100.500 0z" fill="#fff"/><path d="M49 0L54.500 14.500H95L100.500 0" fill="none" stroke="#000"/></svg>
<div class="tabt" style="left:76px;top:681px;">Sheet1</div>
<div class="tabt" style="left:118px;top:681px;font-weight:bold;font-size:9.400px;letter-spacing:0.350px">Sheet2</div>
<div class="tabt" style="left:167px;top:681px;">Sheet3</div>
<div style="left:466px;top:680px;width:3px;height:15px;background:#fff"></div>
<div style="left:469px;top:680px;width:2px;height:15px;background:#000"></div>
<div class="dith" style="left:471px;top:680px;width:297px;height:15px;"></div>
<div class="sbtn" style="left:471px;top:680px;width:16px;height:15px;"><svg style="left:5px;top:4px" width="4" height="7" viewBox="0 0 4 7"><path d="M4 0v7l-4-3.500z"/></svg></div>
<div class="sbtn" style="left:487px;top:680px;width:199px;height:15px;"></div>
<div class="sbtn" style="left:752px;top:680px;width:16px;height:15px;"><svg style="left:6px;top:4px" width="4" height="7" viewBox="0 0 4 7"><path d="M0 0v7l4-3.500z"/></svg></div>
<div style="left:768px;top:680px;width:4px;height:15px;background:#d4d0c8;box-shadow:inset 2px 0 0 #fff"></div>
<div style="left:772px;top:680px;width:16px;height:16px;background:#d4d0c8;border-left:1px solid #000;border-top:1px solid #000;box-sizing:border-box"></div>
<div class="ui" style="left:8px;top:703px;">Ready</div>
<div style="left:417px;top:700px;width:34px;height:17px;border:1px solid #e0d8d4;box-sizing:border-box"></div>
<div style="left:453px;top:700px;width:131px;height:17px;border:1px solid #e0d8d4;box-sizing:border-box"></div>
<div style="left:586px;top:700px;width:27px;height:17px;border:1px solid #e0d8d4;box-sizing:border-box"></div>
<div style="left:616px;top:700px;width:31px;height:17px;border:1px solid #e0d8d4;box-sizing:border-box"></div>
<div style="left:649px;top:700px;width:31px;height:17px;border:1px solid #e0d8d4;box-sizing:border-box"></div>
<div style="left:682px;top:700px;width:30px;height:17px;border:1px solid #e0d8d4;box-sizing:border-box"></div>
<div style="left:714px;top:700px;width:28px;height:17px;border:1px solid #e0d8d4;box-sizing:border-box"></div>
<div style="left:744px;top:700px;width:21px;height:17px;border:1px solid #e0d8d4;box-sizing:border-box"></div>
<div class="ui" style="left:651px;top:703px;">NUM</div>
<svg style="left:776px;top:704px" width="14" height="14" viewBox="0 0 14 14" shape-rendering="crispEdges"><rect x="13" y="0" width="1" height="1" fill="#fff"/><rect x="12" y="1" width="1" height="1" fill="#fff"/><rect x="13" y="1" width="1" height="1" fill="#808080"/><rect x="11" y="2" width="1" height="1" fill="#fff"/><rect x="12" y="2" width="2" height="1" fill="#808080"/><rect x="10" y="3" width="1" height="1" fill="#fff"/><rect x="11" y="3" width="3" height="1" fill="#808080"/><rect x="9" y="4" width="1" height="1" fill="#fff"/><rect x="10" y="4" width="3" height="1" fill="#808080"/><rect x="8" y="5" width="1" height="1" fill="#fff"/><rect x="9" y="5" width="3" height="1" fill="#808080"/><rect x="13" y="5" width="1" height="1" fill="#fff"/><rect x="7" y="6" width="1" height="1" fill="#fff"/><rect x="8" y="6" width="3" height="1" fill="#808080"/><rect x="12" y="6" width="1" height="1" fill="#fff"/><rect x="13" y="6" width="1" height="1" fill="#808080"/><rect x="6" y="7" width="1" height="1" fill="#fff"/><rect x="7" y="7" width="3" height="1" fill="#808080"/><rect x="11" y="7" width="1" height="1" fill="#fff"/><rect x="12" y="7" width="2" height="1" fill="#808080"/><rect x="5" y="8" width="1" height="1" fill="#fff"/><rect x="6" y="8" width="3" height="1" fill="#808080"/><rect x="10" y="8" width="1" height="1" fill="#fff"/><rect x="11" y="8" width="3" height="1" fill="#808080"/><rect x="4" y="9" width="1" height="1" fill="#fff"/><rect x="5" y="9" width="3" height="1" fill="#808080"/><rect x="9" y="9" width="1" height="1" fill="#fff"/><rect x="10" y="9" width="3" height="1" fill="#808080"/><rect x="3" y="10" width="1" height="1" fill="#fff"/><rect x="4" y="10" width="3" height="1" fill="#808080"/><rect x="8" y="10" width="1" height="1" fill="#fff"/><rect x="9" y="10" width="3" height="1" fill="#808080"/><rect x="13" y="10" width="1" height="1" fill="#fff"/><rect x="2" y="11" width="1" height="1" fill="#fff"/><rect x="3" y="11" width="3" height="1" fill="#808080"/><rect x="7" y="11" width="1" height="1" fill="#fff"/><rect x="8" y="11" width="3" height="1" fill="#808080"/><rect x="12" y="11" width="1" height="1" fill="#fff"/><rect x="13" y="11" width="1" height="1" fill="#808080"/><rect x="1" y="12" width="1" height="1" fill="#fff"/><rect x="2" y="12" width="3" height="1" fill="#808080"/><rect x="6" y="12" width="1" height="1" fill="#fff"/><rect x="7" y="12" width="3" height="1" fill="#808080"/><rect x="11" y="12" width="1" height="1" fill="#fff"/><rect x="12" y="12" width="2" height="1" fill="#808080"/><rect x="0" y="13" width="1" height="1" fill="#fff"/><rect x="1" y="13" width="3" height="1" fill="#808080"/><rect x="5" y="13" width="1" height="1" fill="#fff"/><rect x="6" y="13" width="3" height="1" fill="#808080"/><rect x="10" y="13" width="1" height="1" fill="#fff"/><rect x="11" y="13" width="3" height="1" fill="#808080"/></svg>
</div>
</body></html>
